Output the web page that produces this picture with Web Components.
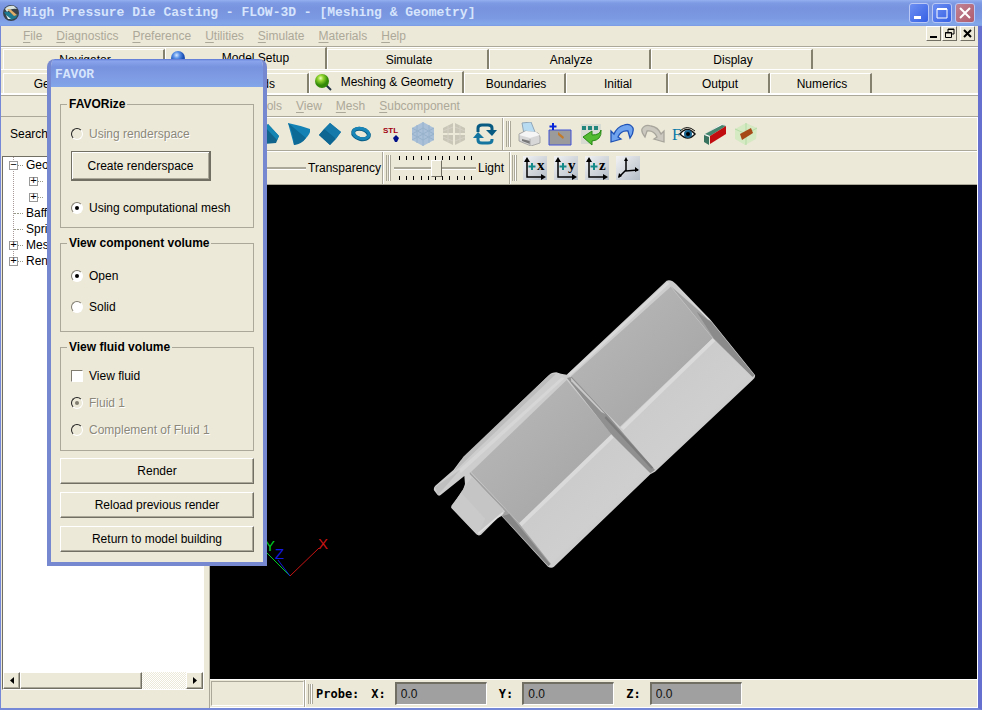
<!DOCTYPE html>
<html lang="en">
<head>
<meta charset="utf-8">
<title>High Pressure Die Casting - FLOW-3D</title>
<style>
:root{--face:#ece9d8;--dark:#aca899;--deep:#716f64;--blue:#7588d8}
html,body{margin:0;height:100%}
body{font:12px/16px "Liberation Sans",Arial,sans-serif;color:#000;background:var(--face);overflow:hidden}
</style>
</head>
<body>
<app-window>
  <title-bar slot="title">High Pressure Die Casting - FLOW-3D - [Meshing &amp; Geometry]</title-bar>
  <menu-bar slot="head" class="main" items="File,Diagnostics,Preference,Utilities,Simulate,Materials,Help" controls></menu-bar>
  <tab-strip slot="head" class="modes">
    <tab-item>Navigator</tab-item><tab-item selected icon="ball">Model Setup</tab-item><tab-item>Simulate</tab-item><tab-item>Analyze</tab-item><tab-item>Display</tab-item>
  </tab-strip>
  <tab-strip slot="head" class="pages" size="small">
    <tab-item>General</tab-item><tab-item>Physics</tab-item><tab-item>Fluids</tab-item><tab-item selected icon="lens">Meshing &amp; Geometry</tab-item><tab-item>Boundaries</tab-item><tab-item>Initial</tab-item><tab-item>Output</tab-item><tab-item>Numerics</tab-item>
  </tab-strip>
  <menu-bar slot="head" class="sub" items="Tools,View,Mesh,Subcomponent"></menu-bar>
  <tree-panel slot="side"></tree-panel>
  <shape-toolbar slot="main"></shape-toolbar>
  <view-toolbar slot="main"></view-toolbar>
  <scene-view slot="main"></scene-view>
  <status-bar slot="main">
    <probe-field label="X:"></probe-field><probe-field label="Y:"></probe-field><probe-field label="Z:"></probe-field>
  </status-bar>
  <favor-dialog slot="overlay"></favor-dialog>
</app-window>

<script>
const base = `:host,*,*::before,*::after{box-sizing:border-box}
button{font:inherit;color:inherit;background:none;border:0;margin:0;padding:0}
input{font:inherit;margin:0}svg{display:block}`;
function define(name, css, html) {
  customElements.define(name, class extends HTMLElement {
    connectedCallback() {
      if (this.shadowRoot) return;
      const root = this.attachShadow({mode: 'open'});
      const t = document.createElement('template');
      t.innerHTML = '<style>' + base + css + '</style>' + (typeof html === 'function' ? html(this) : html);
      root.append(t.content.cloneNode(true));
    }
  });
}

define('app-window', `
:host{display:flex;flex-direction:column;height:100vh;position:relative}
.client{flex:1;min-height:0;display:flex;flex-direction:column;border:solid var(--blue);border-width:0 4px 2px 1px;border-right-color:#6670cf}
.work{flex:1;min-height:0;display:flex}
.main{flex:1;min-width:0;display:flex;flex-direction:column;border-left:1px solid var(--dark);border-right:1px solid #fff}`,
`<slot name="title"></slot>
<div class="client"><slot name="head"></slot><div class="work"><slot name="side"></slot><div class="main"><slot name="main"></slot></div></div></div>
<slot name="overlay"></slot>`);

define('title-bar', `
:host{display:flex;align-items:center;height:26px;padding:0 7px 0 2px;gap:3px;
background:linear-gradient(#95b0f0 0,#7d9ae4 3px,#7893df 8px,#7b98e2 18px,#83a8ea 24px,#7b9be6);
font:bold 13px/20px "Liberation Mono","Courier New",monospace;color:#d6e4fc}
.t{flex:1;white-space:nowrap;overflow:hidden}
button{width:20px;height:20px;border:1px solid #b9c8f5;border-radius:3px;background:linear-gradient(135deg,#6d8ff2,#3560e4);display:grid;place-items:center}
button.x{background:linear-gradient(135deg,#c08394,#b05c6c)}
.b{display:flex;gap:3px}`,
`<svg width="18" height="18" viewBox="0 0 18 18"><circle cx="9" cy="9" r="8" fill="#39424b"/><path d="M3 5q3-4 9-3l3 3q-6-1-10 3z" fill="#d8e2df"/><path d="M2 8q5-1 8 2t6 0l-2 4-5 2q-5-4-7-8z" fill="#1e7a91"/><path d="M5 5l7 7 3-1-7-6z" fill="#e0b06a"/><path d="M4 11l5 4-3 0z" fill="#e9eeee"/></svg>
<span class="t"><slot></slot></span>
<div class="b"><button aria-label="Minimize"><svg width="18" height="18"><path d="M4 12h7v3H4z" fill="#fff"/></svg></button>
<button aria-label="Maximize"><svg width="18" height="18"><path d="M4 5h10v9H4z" fill="none" stroke="#fff"/><path d="M4 4h10v2H4z" fill="#fff"/></svg></button>
<button class="x" aria-label="Close"><svg width="18" height="18"><path d="M4 4l10 10M14 4L4 14" stroke="#fff" stroke-width="2"/></svg></button></div>`);

define('menu-bar', `
:host{display:flex;height:21px;border-bottom:1px solid var(--dark);color:#aca899;justify-content:space-between}
:host(.sub){padding-left:253px}
:host(.main){padding-left:22px}
nav{display:flex;gap:14px;align-items:center}
u{text-underline-offset:2px}
.c{display:flex;padding-right:3px;gap:1px;color:#000}
.c button{width:15px;height:15px;background:var(--face);border:1px solid;border-color:#fff var(--deep) var(--deep) #fff;display:grid;place-items:center}
.c button:last-child{margin-left:2px}`,
el => `<nav>${el.getAttribute('items').split(',').map(s => `<button><u>${s[0]}</u>${s.slice(1)}</button>`).join('')}</nav>` +
(el.hasAttribute('controls') ? `<div class="c"><button aria-label="Minimize document"><svg width="13" height="13"><path d="M3 9h7v2H3z"/></svg></button>
<button aria-label="Restore document"><svg width="13" height="13"><path d="M5 5V2h6v5H8M5 2.5h6M2.500 5.500h6v5h-6z M2 6h7" fill="none" stroke="#000"/></svg></button>
<button aria-label="Close document"><svg width="13" height="13"><path d="M3 3l7 7M10 3l-7 7" stroke="#000" stroke-width="2"/></svg></button></div>` : ''));

define('tab-strip', `
:host{display:flex;align-items:flex-end;height:23px;padding-left:2px;border-top:1px solid #fff;border-bottom:1px solid #fff;--w:162px}
:host([size=small]){height:25px;border-top:0;border-bottom:2px solid #fff;box-shadow:0 1px var(--dark);margin-bottom:1px;--w:102px;--ws:155px}`,
`<slot></slot>`);

const tabIcons = {
 ball: '<svg width="16" height="16" viewBox="0 0 16 16"><defs><radialGradient id="g" cx=".4" cy=".3"><stop stop-color="#d4e8ff"/><stop offset=".45" stop-color="#5b92e8"/><stop offset="1" stop-color="#1b4fb6"/></radialGradient></defs><circle cx="8" cy="8" r="7" fill="url(#g)"/></svg>',
 lens: '<svg width="18" height="18" viewBox="0 0 18 18"><defs><radialGradient id="g" cx=".4" cy=".3"><stop stop-color="#efffbe"/><stop offset=".4" stop-color="#93d62f"/><stop offset="1" stop-color="#338a08"/></radialGradient></defs><path d="M11 11l6 6" stroke="#234" stroke-width="2"/><circle cx="8" cy="8" r="7" fill="url(#g)"/></svg>'
};
define('tab-item', `
:host{display:block;width:var(--w)}
button{display:flex;width:100%;height:20px;padding-left:3px;align-items:center;justify-content:center;border:solid;border-width:1px 2px 0 1px;border-color:#fff #84816f #fff #fff;white-space:nowrap;background:var(--face)}
:host([selected]){width:var(--ws,162px)}
:host([selected]) button{height:22px;justify-content:flex-start;padding:0 0 1px 4px;position:relative}
:host([selected]) span{flex:1;text-align:center}`,
el => `<button role="tab" aria-selected="${el.hasAttribute('selected')}">${tabIcons[el.getAttribute('icon')] || ''}<span><slot></slot></span></button>`);

define('tree-panel', `
:host{display:flex;flex-direction:column;width:208px;flex:none;padding:0 5px 18px 1px}
.s{height:39px;padding:9px 0 0 8px}
.box{flex:1;min-height:0;display:flex;flex-direction:column;background:#fff;border:1px solid;border-color:var(--deep) #fff #fff var(--deep)}
ul{list-style:none;margin:0;padding:0 0 0 6px;flex:1}
li{height:16px;display:flex;align-items:center;background:repeating-linear-gradient(#a99 0 1px,transparent 1px 2px) 4px 0/1px 100% no-repeat}
li:last-child{background-size:1px 8px}
li.k{padding-left:20px}
li::before{content:attr(data-m);width:9px;height:9px;flex:none;font:11px/7px "Liberation Mono",monospace;text-align:center}
li[data-m]::before{border:1px solid #999;background:#fff}
li::after{content:"";order:1;width:5px;border-top:1px dotted #998}
li span{order:2;margin-left:3px;white-space:nowrap}
li:not([data-m])::before{border-bottom:1px dotted #998;height:1px;margin-left:5px;width:4px}
.sb{display:flex;height:17px;background:repeating-conic-gradient(#fff 0 25%,#ece9d8 0 50%) 0 0/2px 2px}
.sb button,.sb i{background:var(--face);border:1px solid;border-color:#fff var(--deep) var(--deep) #fff;box-shadow:inset -1px -1px var(--dark)}
.sb button{width:17px;display:grid;place-items:center}
.sb i{width:61%}.sb button:last-child{margin-left:auto}`,
`<div class="s">Search</div>
<div class="box"><ul><li data-m="−"><span>Geometry</span></li><li class="k" data-m="+"></li><li class="k" data-m="+"></li><li><span>Baffles</span></li><li><span>Springs</span></li><li data-m="+"><span>Meshing</span></li><li data-m="+"><span>Rendering</span></li></ul>
<div class="sb"><button aria-label="Scroll left"><svg width="8" height="9"><path d="M6 1v7L2 4.500z"/></svg></button><i></i><button aria-label="Scroll right"><svg width="8" height="9"><path d="M2 1v7l4-3.500z"/></svg></button></div></div>`);

const bar = `
:host{display:flex;height:34px;border-top:1px solid #fff;border-bottom:1px solid var(--dark)}
.g{display:flex;align-items:center;border-right:1px solid var(--dark)}
.g + .g{border-left:1px solid #fff}
.g:last-child{border-right:0}
.h{width:5px;height:26px;flex:none;border:solid;border-width:0 1px;border-color:#fff var(--dark);background:linear-gradient(90deg,var(--face) 0 1px,var(--dark) 1px 2px,#fff 2px)}
.g button{width:31px;height:28px;display:grid;place-items:center}`;
const ic = {
 sphere:['Sphere','<circle cx="12" cy="12" r="9" fill="#1478a8"/>'],
 cyl:['Cylinder','<path d="M2 16L12 2l11 12-3 7-12 1z" fill="#11658c"/><path d="M12 2l11 12-2 4L9 5z" fill="#1585b4"/>'],
 cone:['Cone','<path d="M1 1q10 2 22 6 1 5-6 11-5 4-10 5z" fill="#1482b4"/><path d="M1 1q5 9 6 22 8-1 12-7z" fill="#0d6996"/>'],
 box:['Box','<path d="M12 1L23 10 12 23 1 13z" fill="#0f6a98"/><path d="M12 1l11 9-5 7L6 7z" fill="#1579aa"/><path d="M6 7l12 10-6 6L1 13z" fill="#0d6591"/>'],
 torus:['Torus','<ellipse cx="12" cy="12" rx="8" ry="5" transform="rotate(15 12 12)" fill="none" stroke="#075d85" stroke-width="4"/><ellipse cx="12" cy="11.500" rx="8" ry="5" transform="rotate(15 12 12)" fill="none" stroke="#1a86b8" stroke-width="3"/>'],
 stl:['STL','<text x="3" y="11" font-family="Liberation Sans" font-weight="bold" font-size="8" fill="#a00010">STL</text><path d="M16 13l3 3-2 4h-2l-2-4z" fill="#001088"/>'],
 mesh:['Mesh block','<path d="M12 0l11 6v12l-11 6-11-6V6z" fill="#a9c0d8"/><path d="M12 0v24M1 6l11 6 11-6M1 18l11-6 11 6M1 12l11-6 11 6-11 6zM6 3v18M18 3v18" fill="none" stroke="#98b2cc" stroke-width="1"/>'],
 meshx:['Split mesh','<path d="M11 1v10H1V6zM13 1v10h10V6zM11 13v10L1 18v-5zM13 13v10l10-5v-5z" fill="#c9c6b8"/><path d="M6 4v16M18 4v16M1 9l10-4M13 5l10 4M1 15l10 4M13 19l10-4" stroke="#d5d2c5" fill="none"/>'],
 swap:['Refresh','<path d="M5 10V6q0-3 4-3h6q4 0 4 3v4" fill="none" stroke="#075b82" stroke-width="3"/><path d="M13 8h11l-5 6z" fill="#075b82"/><path d="M5 14v4q0 3 4 3h6q4 0 4-3v-1" fill="none" stroke="#1476a0" stroke-width="3"/><path d="M0 16h11L5 10z" fill="#1476a0"/>'],
 print:['Print','<path d="M5 1l9-1 4 10-11 2z" fill="#b7dcf2" stroke="#8fa6b8"/><path d="M2 12l6-3 13 2 2 4v6l-9 3L2 19z" fill="#d7d7d7" stroke="#999" stroke-width=".8"/><path d="M2 13l11 3 10-3-4-3-10-1z" fill="#f5f5f5"/><path d="M5 17l8 2v3l-8-3z" fill="#777"/><path d="M13 17v6" stroke="#aaa"/>'],
 pick:['Add probe','<path d="M1 8h22v15H1z" fill="#9b9b9b" stroke="#4052d8"/><path d="M5 1v7M1.500 4.500h7" stroke="#0726d9" stroke-width="2"/><path d="M10 10l6 5-1 2-5-4z" fill="#c47a28"/>'],
 run:['Run','<path d="M2 2l20 0 0 10-12 10H2z" fill="#d8dbd1"/><path d="M3 4h4v4H3zM9 4h4v4H9zM15 4h4v4h-4z" fill="#23867c"/><path d="M4 15l9-6v4q8 0 9-5 1 10-9 11v4z" fill="#52bb31" stroke="#258814"/>'],
 undo:['Undo','<path d="M1 9v11l10-3-3-2q3-7 10-6l2 7q4-5 3-10-3-5-9-3Q7 5 4 12z" fill="#70a4ee" stroke="#1f52b6" stroke-width="1.300"/>'],
 redo:['Redo','<path d="M23 9v11l-10-3 3-2Q13 8 6 9l-2 6Q0 10 1 7q3-5 9-3 7 1 10 8z" fill="#cac8bf" stroke="#a7a59c" stroke-width="1.300"/>'],
 eye:['Show','<text x="0" y="18" font-family="Liberation Serif" font-size="16" fill="#0878a8">F</text><path d="M8 12q7-9 15 0-7 8-15 0z" fill="#fff" stroke="#111" stroke-width="1.500"/><circle cx="16" cy="12" r="4" fill="#18638e"/><circle cx="16" cy="12" r="2"/><path d="M8 9q7-7 15 0" fill="none" stroke="#111"/>'],
 slab:['Clip','<path d="M1 13L18 2l4 1-16 12z" fill="#fff" stroke="#ccc" stroke-width=".5"/><path d="M1 13l5 2v8l-5-3z" fill="#37735e"/><path d="M2 12L19 3l4 1L7 14z" fill="#45866e"/><path d="M7 14l16-10v8L7 22z" fill="#c20d10"/>'],
 glass:['Transparent','<path d="M12 1l11 5-1 11-11 6L1 17V7z" fill="#cde8bc" opacity=".75"/><path d="M1 7l11 5 11-6M12 12v11M12 1v11" stroke="#b3dca4" fill="none"/><path d="M6 12l11-6 2 5-11 7z" fill="#a64a18"/>']
};
const btn = k => `<button aria-label="${ic[k][0]}"><svg width="24" height="24" viewBox="0 0 24 24">${ic[k][1]}</svg></button>`;
define('shape-toolbar', bar + `.a{width:293px;justify-content:flex-end;padding-right:2px}.b{flex:1;padding-left:2px}.b .h{margin-right:2px}`,
`<div class="g a">${['sphere','cyl','cone','box','torus','stl','mesh','meshx','swap'].map(btn).join('')}</div>
<div class="g b"><div class="h"></div>${['print','pick','run','undo','redo','eye','slab','glass'].map(btn).join('')}</div>`);

const axis = (l, t) => `<button aria-label="${l}"><svg width="24" height="24" viewBox="0 0 24 24"><defs><linearGradient id="m" x2="1" y2="1"><stop stop-color="#f2f3f4"/><stop offset="1" stop-color="#b4bdc6"/></linearGradient></defs><path d="M0 0h24v24H0z" fill="url(#m)"/>${t ? `<path d="M4 4v17h16" fill="none" stroke="#000" stroke-width="1.500"/><path d="M1 6l3-5 3 5zM18 18l5 3-5 3z"/><path d="M9 7v7M5.500 10.500h7" stroke="#128a8a" stroke-width="2"/><text x="14" y="14" font-family="Liberation Serif" font-weight="bold" font-size="15">${t}</text>` : '<path d="M10 3v12l12-1M10 14l-7 7" fill="none" stroke="#000" stroke-width="1.500"/><path d="M8 5l2-4 2 4zM19 11l4 3-4 2zM2 22l1-5 3 3z"/>'}</svg></button>`;
define('view-toolbar', bar + `
.a{width:173px;justify-content:flex-end;padding-right:1px}.b{width:127px;padding-left:2px}.c{flex:1;padding-left:1px}.c .h{margin-right:2px}
label{white-space:nowrap;display:flex;align-items:center;gap:2px}
.r{width:82px;height:26px;display:grid;align-items:center;margin-left:3px}
.a .r{width:90px}
.t{grid-area:1/1;height:24px;display:flex;justify-content:space-between;padding:0 4px 0 5px}
.t i{width:1px;background:linear-gradient(#000 0 4px,transparent 4px 20px,#000 20px)}
input{grid-area:1/1;appearance:none;background:none;width:100%;height:17px}
input::-webkit-slider-runnable-track{height:3px;background:var(--dark);border-bottom:1px solid #fff}
input::-webkit-slider-thumb{appearance:none;width:11px;height:17px;margin-top:-7px;background:var(--face);border:1px solid;border-color:#fff var(--deep) var(--deep) #fff}`,
`<div class="g a"><label><span class="r"><input type="range" value="0"></span>Transparency</label></div>
<div class="g b"><div class="h"></div><label><span class="r"><span class="t">${'<i></i>'.repeat(11)}</span><input type="range" value="52"></span>Light</label></div>
<div class="g c"><div class="h"></div>${axis('View X','x')}${axis('View Y','y')}${axis('View Z','z')}${axis('Isometric view')}</div>`);

define('scene-view', `:host{display:block;flex:1;min-height:0;background:#000;overflow:hidden}svg{width:100%;height:100%}`,
`<svg viewBox="210 185 767 494" preserveAspectRatio="xMidYMid slice" role="img" aria-label="Model">
<defs><linearGradient id="d" x1="0" y1="0" x2="1" y2="1"><stop stop-color="#bbb"/><stop offset="1" stop-color="#a2a2a2"/></linearGradient>
<linearGradient id="l" x1="0" y1="0" x2="1" y2="1"><stop stop-color="#c7c7c7"/><stop offset=".6" stop-color="#cfcfcf"/><stop offset="1" stop-color="#c7c7c7"/></linearGradient></defs>
<g transform="translate(420 270) scale(.33333)">
<path d="M740 32q8-4 18 2l10 8 104 108 133 165q2 8-8 16L705 605l-14 8L402 890q-8 6-18 0L245 738l-12 6-50 50q-7 5-14-1L94 714q-2-6 4-12l30-40 7-20-2-24-72 58q-6 3-10-3l-9-12q-2-8 4-14l55-48 20-27L385 317q10-10 24-10l14 4 17 3z" fill="#cdcdcd"/>
<path d="M101 605l29-45L385 317q10-8 22-4L118 590z" fill="#bdbdbd"/>
<path d="M118 598L425 322l9 3L122 610z" fill="#d6d6d6"/>
<path d="M45 652l75-53-66 76z" fill="#bfbfbf"/>
<path d="M440 330L153 606l146 155 278-266z" fill="url(#d)"/>
<path d="M752 50L452 320l148 150 278-265z" fill="url(#d)"/>
<path d="M883 213L607 480l97 118 294-273z" fill="url(#l)"/>
<path d="M580 502L303 768l90 114 297-273z" fill="url(#l)"/>
<path d="M752 48l120 105 131 163-4 6-118-115z" fill="#a4a4a4"/>
<path d="M830 125l44 32 129 159-6 4-116-115z" fill="#8b8b8b"/>
<path d="M765 45l108 107-10-4z" fill="#ddd"/>
<path d="M441 324l14-4 103 110 147 170-14 10-118-118z" fill="#909090"/>
<path d="M452 322l104 110-12-6-90-92z" fill="#c9c9c9"/>
<path d="M558 438l142 155-6 3-140-152z" fill="#7c7c7c"/>
<path d="M878 205L602 472l8 9 276-268z" fill="#dadada"/>
<path d="M574 493L297 760l8 9 276-266z" fill="#dadada"/>
<path d="M150 606l148 155 95 121-8 7-140-151 10-14-106-112z" fill="#a2a2a2"/>
<path d="M248 738l20-6 122 150-4 6z" fill="#858585"/>
<path d="M155 622l-30 42-30 47 78 82 76-64-2-14z" fill="#c5c5c5"/>
<path d="M124 668l72 78-23 48-78-82z" fill="#cacaca"/>
<path d="M175 790l74-62" stroke="#e0e0e0" stroke-width="5"/>
<path d="M745 38L446 316" stroke="#d9d9d9" stroke-width="8"/>
</g>
<path d="M266 552l24 24" stroke="#0c2"/><path d="M278 560l12 16" stroke="#1418d8"/><path d="M290 576l29-28" stroke="#c81414"/>
<g font-family="Liberation Sans" font-size="15"><text x="265" y="551" fill="#0c2">Y</text><text x="275" y="559" fill="#1418e0">Z</text><text x="318" y="549" fill="#c81414">X</text></g>
</svg>`);

define('status-bar', `
:host{display:flex;height:29px;align-items:center;border:solid #fff;border-width:1px 0;font-family:"DejaVu Sans Mono",monospace;font-weight:bold}
.m{width:93px;height:25px;margin-left:1px;border:1px solid;border-color:var(--dark) #fff #fff var(--dark);flex:none}
.v{align-self:stretch;border-left:1px solid var(--dark);border-right:1px solid #fff}
.h{width:5px;height:20px;margin:0 3px 0 2px;border:solid;border-width:0 1px;border-color:#fff var(--dark);background:linear-gradient(90deg,var(--face) 0 1px,var(--dark) 1px 2px,#fff 2px)}
.f{display:flex;gap:12px;margin-left:12px}`,
`<div class="m"></div><div class="v"></div><div class="h"></div><span>Probe:</span><div class="f"><slot></slot></div>`);
define('probe-field', `
:host{display:block}
label{display:flex;align-items:center;gap:9px}
input{width:92px;height:23px;padding:0 4px;background:#a0a0a0;border:1px solid;border-color:var(--deep) #fff #fff var(--deep);border-width:2px 1px 1px 2px;font:12px "Liberation Sans",Arial,sans-serif;color:#111}`,
el => `<label>${el.getAttribute('label')}<input value="0.0" readonly></label>`);

define('favor-dialog', `
:host{position:absolute;left:47px;top:59px;width:220px;border-radius:8px 8px 0 0;background:var(--face);border:solid #7588d0;border-width:0 4px 4px;overflow:hidden}
header{height:28px;margin:0 -4px;padding:7px 0 0 8px;background:linear-gradient(#5a76d2 0,#8aa5ec 2px,#7893df 8px,#7e9be4 18px,#83a5e9);font:bold 13px/18px "Liberation Mono",monospace;color:#d6e4fc}
.c{padding:9px 9px 10px;display:flex;flex-direction:column;gap:7px}
.k{display:flex;flex-direction:column;gap:8px}
.k button{height:26px;background:var(--face);border:1px solid;border-color:#fff var(--deep) var(--deep) #fff;box-shadow:inset -1px -1px var(--dark)}`,
`<header>FAVOR</header><div class="c">
<group-box label="FAVORize" class="one"><radio-row name="s" disabled>Using renderspace</radio-row><push-button>Create renderspace</push-button><radio-row name="s" checked>Using computational mesh</radio-row></group-box>
<group-box label="View component volume" class="two"><radio-row checked>Open</radio-row><radio-row>Solid</radio-row></group-box>
<group-box label="View fluid volume" class="three"><radio-row type="checkbox">View fluid</radio-row><radio-row checked disabled>Fluid 1</radio-row><radio-row disabled>Complement of Fluid 1</radio-row></group-box>
<div class="k"><button>Render</button><button>Reload previous render</button><button>Return to model building</button></div></div>`);

define('group-box', `
:host{display:block}
fieldset{margin:0;min-width:0;border:1px solid var(--dark);display:block}
legend{font-weight:bold;padding:0 2px;margin-left:-4px;line-height:16px}
.l{display:flex;flex-direction:column}
:host(.one) .l{gap:9px}
:host(.one) fieldset{padding:14px 10px 11px}
:host(.two) .l{gap:15px}
:host(.two) fieldset{padding:17px 10px 16px}
:host(.three) .l{gap:11px}
:host(.three) fieldset{padding:13px 10px 12px}`,
el => `<fieldset><legend>${el.getAttribute('label')}</legend><div class="l"><slot></slot></div></fieldset>`);

define('push-button', `
:host{display:block;margin-bottom:10px}
button{width:140px;height:30px;background:var(--face);border:2px solid;border-color:var(--deep);border-top-width:1px;border-left-width:1px;box-shadow:inset 1px 1px #fff,inset -1px -1px var(--dark)}`,
`<button><slot></slot></button>`);

define('radio-row', `
:host{display:block;height:16px}
label{display:flex;align-items:center;gap:6px;white-space:nowrap}
input{appearance:none;width:12px;height:12px;border:1px solid;border-color:#807d70 #fff #fff #807d70;background:#fff;display:grid;place-items:center}
input[type=radio]{border-radius:50%}
input:checked::before{content:"";width:4px;height:4px;border-radius:50%;background:#000}
:host([disabled]) label{color:#8b887b;text-shadow:1px 1px #fff}
:host([disabled]) input{background:var(--face);border-color:#222 #fff #fff #222}
:host([disabled]) input::before{background:#807d70}`,
el => `<label><input type="${el.getAttribute('type') || 'radio'}" ${el.hasAttribute('checked') ? 'checked' : ''} ${el.hasAttribute('disabled') ? 'disabled' : ''}><span><slot></slot></span></label>`);
</script>
</body>
</html>
